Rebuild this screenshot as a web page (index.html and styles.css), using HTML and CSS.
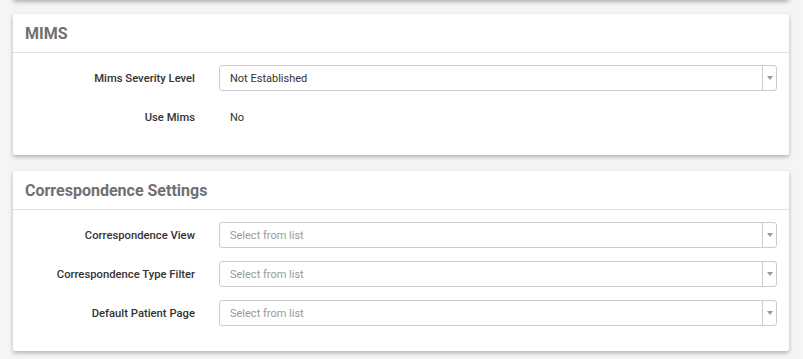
FILE: index.html
```html
<!DOCTYPE html>
<html lang="en">
<head>
  <meta charset="UTF-8" />
  <title>Settings</title>
  <link rel="stylesheet" href="styles.css">
</head>
<body>

  <div class="panel panel-prev"></div>

  <div class="panel">
    <div class="panel-heading">
      <h3>MIMS</h3>
    </div>
    <div class="panel-body">
      <div class="form-row">
        <label class="form-label">Mims Severity Level</label>
        <div class="form-field">
          <div class="select">
            <span class="select-value">Not Established</span>
            <span class="select-arrow"></span>
          </div>
        </div>
      </div>
      <div class="form-row">
        <label class="form-label">Use Mims</label>
        <div class="form-field">
          <span class="static-value">No</span>
        </div>
      </div>
    </div>
  </div>

  <div class="panel">
    <div class="panel-heading">
      <h3>Correspondence Settings</h3>
    </div>
    <div class="panel-body">
      <div class="form-row">
        <label class="form-label">Correspondence View</label>
        <div class="form-field">
          <div class="select">
            <span class="select-value placeholder">Select from list</span>
            <span class="select-arrow"></span>
          </div>
        </div>
      </div>
      <div class="form-row">
        <label class="form-label">Correspondence Type Filter</label>
        <div class="form-field">
          <div class="select">
            <span class="select-value placeholder">Select from list</span>
            <span class="select-arrow"></span>
          </div>
        </div>
      </div>
      <div class="form-row">
        <label class="form-label">Default Patient Page</label>
        <div class="form-field">
          <div class="select">
            <span class="select-value placeholder">Select from list</span>
            <span class="select-arrow"></span>
          </div>
        </div>
      </div>
    </div>
  </div>

</body>
</html>
```

FILE: styles.css
```css
:root {
  --page-bg: #f5f5f5;
  --border-color: #cccccc;
  --title-color: #707070;
  --text-color: #333333;
  --placeholder-color: #999999;
}

body {
  background: var(--page-bg);
  font-family: Roboto, 'Liberation Sans', sans-serif;
  margin: 0;
  padding: 0 14px 0 13px;
  overflow: hidden;
}

.panel {
  background: #ffffff;
  border-radius: 2px;
  box-shadow: 0 2px 4px rgba(0, 0, 0, 0.28);
  margin-bottom: 16px;
}

.panel-prev {
  height: 20px;
  margin-top: -20px;
  margin-bottom: 14px;
}

.panel-heading {
  height: 38px;
  border-bottom: 1px solid #e2e2e2;
  display: flex;
  align-items: center;
  padding: 0 12px;
}

.panel-heading h3 {
  margin: 0;
  font-size: 16px;
  font-weight: 700;
  color: var(--title-color);
}

.panel-body {
  padding: 12px 0 12px;
}

.form-row {
  display: grid;
  grid-template-columns: 25% 1fr;
  align-items: center;
  height: 26px;
  margin-bottom: 13px;
}

.form-label {
  text-align: right;
  padding-right: 12px;
  font-size: 11.25px;
  font-weight: 500;
  color: var(--text-color);
}

.form-field {
  min-width: 0;
  padding: 0 12px;
  display: flex;
  align-items: center;
}

.select {
  flex: 1;
  height: 24px;
  border: 1px solid var(--border-color);
  border-radius: 3px;
  display: flex;
  align-items: center;
}

.select-value {
  flex: 1;
  padding-left: 10px;
  font-size: 11px;
  color: var(--text-color);
}

.select-value.placeholder {
  color: var(--placeholder-color);
}

.select-arrow {
  width: 13px;
  height: 100%;
  border-left: 1px solid var(--border-color);
  position: relative;
}

.select-arrow::after {
  content: '';
  position: absolute;
  left: 4px;
  top: 10px;
  border-left: 3px solid transparent;
  border-right: 3px solid transparent;
  border-top: 4px solid #999999;
}

.static-value {
  padding-left: 11px;
  font-size: 11px;
  color: var(--text-color);
}
```
